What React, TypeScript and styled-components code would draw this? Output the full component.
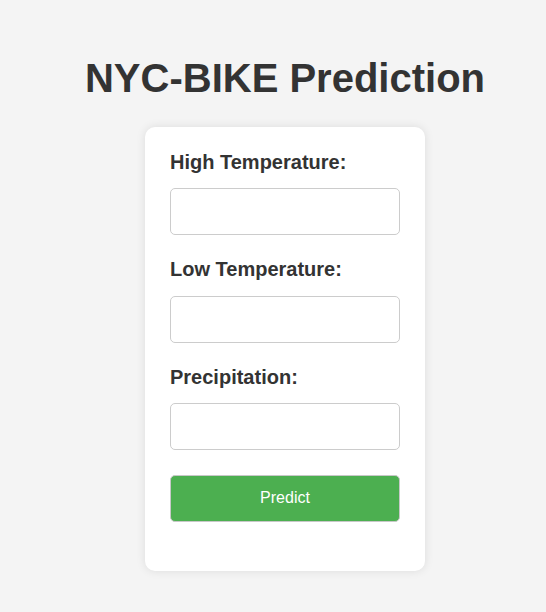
import React from "react";
import styled, { createGlobalStyle } from "styled-components";

const Global = createGlobalStyle`
  html, body { margin: 0; padding: 0; background: #f4f4f4; }
  body { font-family: "Liberation Sans", Arial, sans-serif; color: #333; }
`;

const Page = styled.div`
  display: flex;
  flex-direction: column;
  align-items: center;
  padding: 54px 0 40px 24px;
`;

const Title = styled.h1`
  margin: 0 0 25px;
  font-size: 40px;
  font-weight: 700;
  color: #333;
  line-height: 48px;
`;

const Card = styled.form`
  width: 230px;
  padding: 23.5px 25px 49.5px;
  background: #fff;
  border-radius: 10px;
  box-shadow: 0 0 10px rgba(0, 0, 0, 0.1);
  display: flex;
  flex-direction: column;
`;

const Field = styled.div<{ $gap: number }>`
  display: flex;
  flex-direction: column;
  margin-bottom: ${(p) => p.$gap}px;
`;

const Label = styled.label`
  font-size: 20px;
  font-weight: 700;
  line-height: 23px;
  margin-bottom: 14.5px;
  color: #333;
`;

const Input = styled.input`
  box-sizing: border-box;
  width: 100%;
  height: 47px;
  border: 1px solid #ccc;
  border-radius: 5px;
  padding: 10px;
  font-size: 16px;
  font-family: inherit;
  background: #fff;
`;

const Button = styled.button`
  box-sizing: border-box;
  width: 100%;
  height: 47px;
  background: #4caf50;
  color: #fff;
  border: 1px solid #c8c8c8;
  border-radius: 5px;
  font-size: 16px;
  font-family: "Liberation Sans", Arial, sans-serif;
  cursor: pointer;
`;

export default function App() {
  return (
    <>
      <Global />
      <Page>
        <Title>NYC-BIKE Prediction</Title>
        <Card onSubmit={(e) => e.preventDefault()}>
          <Field $gap={23}>
            <Label>High Temperature:</Label>
            <Input type="text" />
          </Field>
          <Field $gap={23}>
            <Label>Low Temperature:</Label>
            <Input type="text" />
          </Field>
          <Field $gap={24.5}>
            <Label>Precipitation:</Label>
            <Input type="text" />
          </Field>
          <Button type="submit">Predict</Button>
        </Card>
      </Page>
    </>
  );
}
